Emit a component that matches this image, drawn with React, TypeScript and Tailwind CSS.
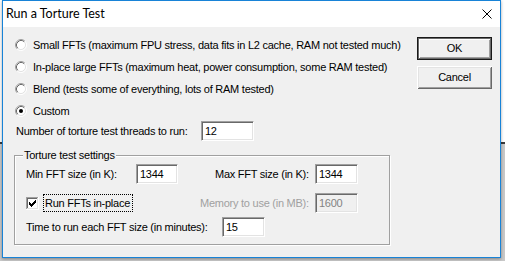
import React from "react";

const sunken =
  "border border-t-[#a0a0a0] border-l-[#a0a0a0] border-r-white border-b-white shadow-[inset_1px_1px_0_#696969,inset_-1px_-1px_0_#e3e3e3]";

function Radio({ checked }: { checked?: boolean }) {
  return (
    <svg width="12" height="12" viewBox="0 0 12 12" className="shrink-0">
      <circle cx="6" cy="6" r="4.5" fill="#fff" />
      <path d="M2.11 9.89 A5.5 5.5 0 0 1 9.89 2.11" fill="none" stroke="#a0a0a0" strokeWidth="1" />
      <path d="M9.89 2.11 A5.5 5.5 0 0 1 2.11 9.89" fill="none" stroke="#ffffff" strokeWidth="1" />
      <path d="M2.82 9.18 A4.5 4.5 0 0 1 9.18 2.82" fill="none" stroke="#696969" strokeWidth="1" />
      <path d="M9.18 2.82 A4.5 4.5 0 0 1 2.82 9.18" fill="none" stroke="#e3e3e3" strokeWidth="1" />
      {checked && <circle cx="6" cy="6" r="2" fill="#000" />}
    </svg>
  );
}

function Checkbox() {
  const px: [number, number][] = [
    [9, 3],
    [8, 4], [9, 4],
    [3, 5], [7, 5], [8, 5], [9, 5],
    [3, 6], [4, 6], [6, 6], [7, 6], [8, 6],
    [3, 7], [4, 7], [5, 7], [6, 7], [7, 7],
    [4, 8], [5, 8], [6, 8],
    [5, 9],
  ];
  return (
    <svg width="13" height="13" viewBox="0 0 13 13" className="shrink-0" shapeRendering="crispEdges">
      <rect x="0" y="0" width="13" height="13" fill="#fff" />
      <rect x="0" y="0" width="12" height="1" fill="#a0a0a0" />
      <rect x="0" y="0" width="1" height="12" fill="#a0a0a0" />
      <rect x="1" y="1" width="10" height="1" fill="#696969" />
      <rect x="1" y="1" width="1" height="10" fill="#696969" />
      <rect x="1" y="11" width="11" height="1" fill="#e3e3e3" />
      <rect x="11" y="1" width="1" height="11" fill="#e3e3e3" />
      {px.map(([x, y], i) => (
        <rect key={i} x={x} y={y} width="1" height="1" fill="#000" />
      ))}
    </svg>
  );
}

function Field({ value, w, disabled }: { value: string; w: string; disabled?: boolean }) {
  return (
    <div
      className={`${sunken} ${w} h-[20px] flex items-center pl-[3px] shrink-0 ${
        disabled ? "bg-[#f0f0f0] text-[#838383]" : "bg-white text-black"
      }`}
    >
      {value}
    </div>
  );
}

export default function App() {
  return (
    <div className="relative w-[505px] h-[261px] overflow-hidden bg-[linear-gradient(to_bottom,#ffffff_142px,#3a3a3a_142px,#3a3a3a_144px,#c9c9c9_144px)]">
      <div className="ml-[2px] w-[499px] h-[258px] border border-[#1883d7] flex flex-col bg-[#f0f0f0] shadow-[0_1px_3px_rgba(0,0,0,0.35)]">
        {/* Title bar */}
        <div className="h-[26px] bg-white flex items-center justify-between pl-[3px] pr-[8px] shrink-0">
          <span className="font-['Lato'] text-[12.5px] text-black">Run a Torture Test</span>
          <svg width="10" height="10" viewBox="0 0 10 10">
            <path d="M0.5 0.5 L9.5 9.5 M9.5 0.5 L0.5 9.5" stroke="#000" strokeWidth="1" />
          </svg>
        </div>

        {/* Client */}
        <div className="flex-1 flex font-['Liberation_Sans'] text-[11px] leading-[13px] tracking-[-0.25px] text-black">
          <div className="flex-1 flex flex-col pl-[12px] pt-[7px]">
            {[
              "Small FFTs (maximum FPU stress, data fits in L2 cache, RAM not tested much)",
              "In-place large FFTs (maximum heat, power consumption, some RAM tested)",
              "Blend (tests some of everything, lots of RAM tested)",
              "Custom",
            ].map((t, i) => (
              <div key={i} className="h-[22px] flex items-center gap-[6px]">
                <Radio checked={i === 3} />
                <span>{t}</span>
              </div>
            ))}

            <div className="h-[20px] mt-[-1px] flex items-center">
              <span className="w-[186px] pl-[1px]">Number of torture test threads to run:</span>
              <Field value="12" w="w-[53px]" />
            </div>

            <div className="relative mt-[14px] ml-[-1px] w-[376px] h-[90px] border border-[#a0a0a0] shadow-[inset_1px_1px_0_#fff,1px_1px_0_#fff] pt-[8px] pl-[11px]">
              <span className="absolute left-[8px] top-[-7px] px-[1px] bg-[#f0f0f0]">Torture test settings</span>

              <div className="h-[20px] flex items-center">
                <span className="w-[110px]">Min FFT size (in K):</span>
                <Field value="1344" w="w-[42px]" />
                <span className="ml-[37px] w-[100px]">Max FFT size (in K):</span>
                <Field value="1344" w="w-[43px]" />
              </div>

              <div className="h-[20px] mt-[9px] flex items-center">
                <Checkbox />
                <span className="ml-[4px] w-[90px] h-[18px] border border-dotted border-black flex items-center pl-[1px]">
                  Run FFTs in-place
                </span>
                <span className="ml-[67px] w-[115px] text-[#a0a0a0]">Memory to use (in MB):</span>
                <Field value="1600" w="w-[43px]" disabled />
              </div>

              <div className="h-[20px] mt-[4px] flex items-center">
                <span className="w-[196px]">Time to run each FFT size (in minutes):</span>
                <Field value="15" w="w-[43px]" />
              </div>
            </div>
          </div>

          <div className="w-[75px] mr-[8px] pt-[10px] flex flex-col gap-[6px]">
            <button className="h-[23px] w-full border border-[#1a1a1a] bg-[#f0f0f0] shadow-[inset_1px_1px_0_#696969,inset_-1px_-1px_0_#696969,inset_2px_2px_0_#fff,inset_-2px_-2px_0_#a0a0a0] flex items-center justify-center">
              OK
            </button>
            <button className="h-[23px] w-full bg-[#f0f0f0] shadow-[inset_1px_1px_0_#fff,inset_-1px_-1px_0_#696969,inset_2px_2px_0_#e3e3e3,inset_-2px_-2px_0_#a0a0a0] flex items-center justify-center">
              Cancel
            </button>
          </div>
        </div>
      </div>
    </div>
  );
}
